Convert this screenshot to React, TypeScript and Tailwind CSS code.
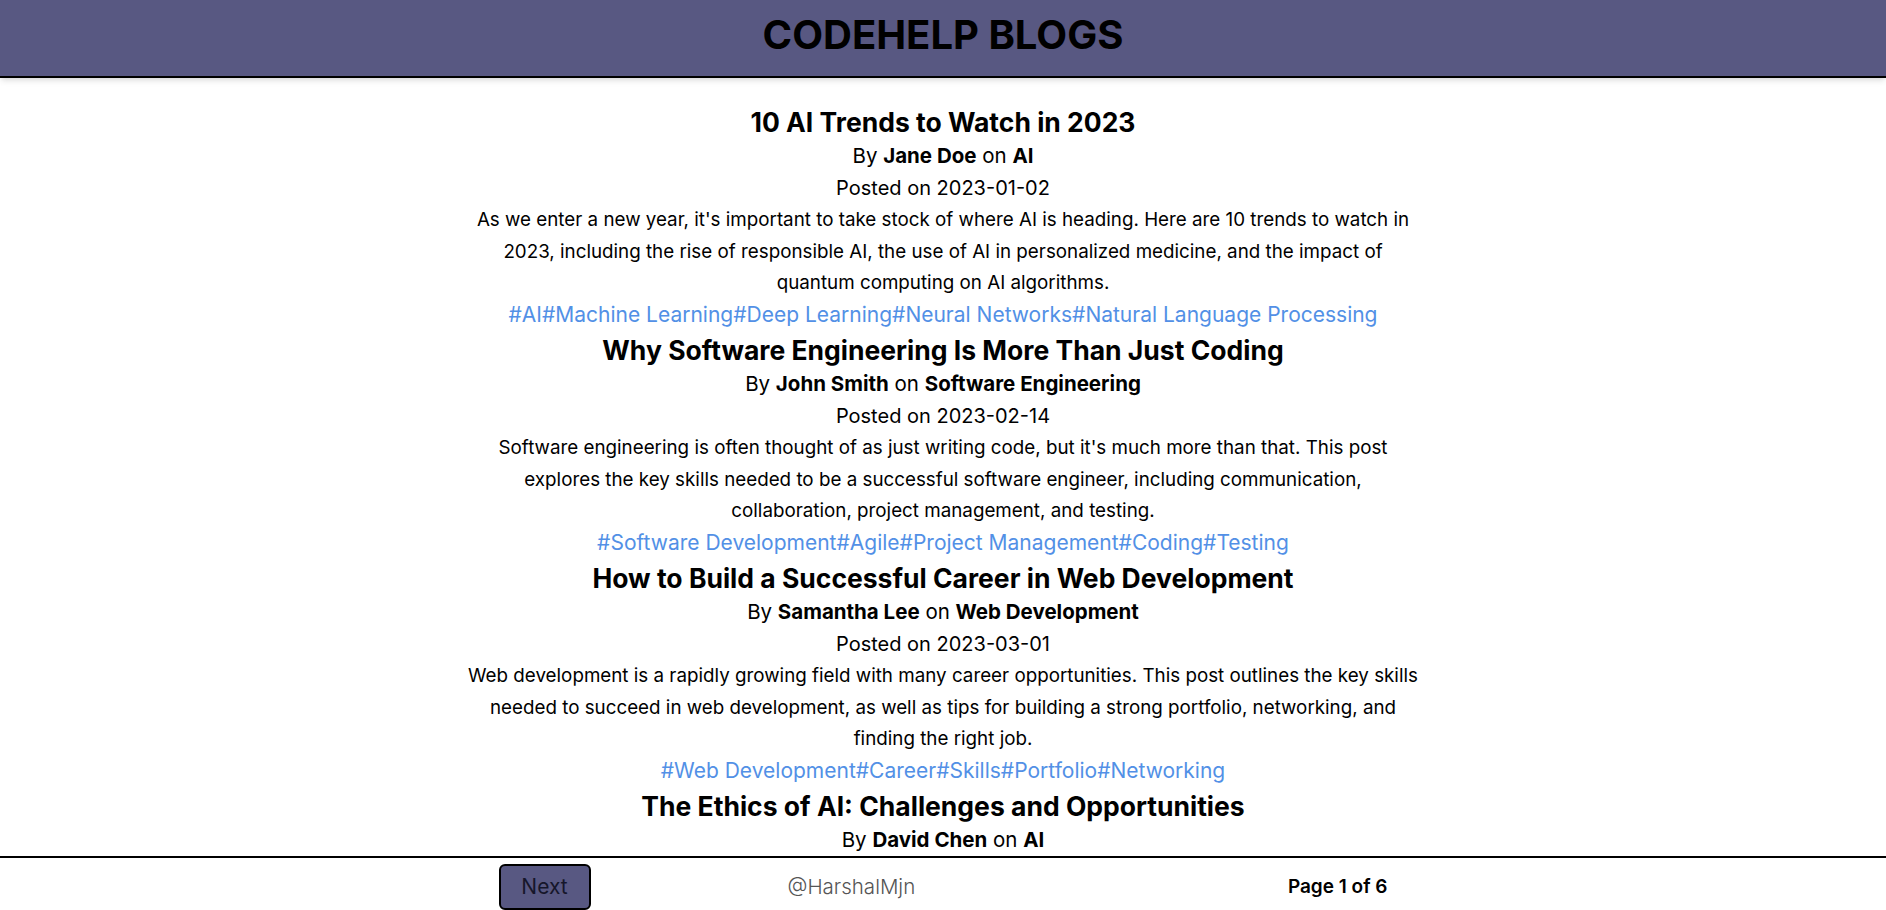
import React from 'react'

type Post = {
  id: number
  title: string
  author: string
  category: string
  date: string
  content: string
  tags: string[]
}

const posts: Post[] = [
  {
    id: 1,
    title: '10 AI Trends to Watch in 2023',
    author: 'Jane Doe',
    category: 'AI',
    date: '2023-01-02',
    content:
      "As we enter a new year, it's important to take stock of where AI is heading. Here are 10 trends to watch in 2023, including the rise of responsible AI, the use of AI in personalized medicine, and the impact of quantum computing on AI algorithms.",
    tags: ['AI', 'Machine Learning', 'Deep Learning', 'Neural Networks', 'Natural Language Processing'],
  },
  {
    id: 2,
    title: 'Why Software Engineering Is More Than Just Coding',
    author: 'John Smith',
    category: 'Software Engineering',
    date: '2023-02-14',
    content:
      "Software engineering is often thought of as just writing code, but it's much more than that. This post explores the key skills needed to be a successful software engineer, including communication, collaboration, project management, and testing.",
    tags: ['Software Development', 'Agile', 'Project Management', 'Coding', 'Testing'],
  },
  {
    id: 3,
    title: 'How to Build a Successful Career in Web Development',
    author: 'Samantha Lee',
    category: 'Web Development',
    date: '2023-03-01',
    content:
      'Web development is a rapidly growing field with many career opportunities. This post outlines the key skills needed to succeed in web development, as well as tips for building a strong portfolio, networking, and finding the right job.',
    tags: ['Web Development', 'Career', 'Skills', 'Portfolio', 'Networking'],
  },
  {
    id: 4,
    title: 'The Ethics of AI: Challenges and Opportunities',
    author: 'David Chen',
    category: 'AI',
    date: '2023-04-10',
    content:
      'As AI becomes more pervasive in our lives, it raises important ethical questions. This post examines the challenges and opportunities of AI ethics, including bias, privacy, accountability, and transparency.',
    tags: ['AI', 'Ethics', 'Bias', 'Privacy', 'Transparency'],
  },
]

function BlogCard({ post }: { post: Post }) {
  return (
    <div className="flex flex-col items-center text-center leading-[31.5px] pb-[2px]">
      <p className="text-[26.5px] leading-[36px] font-bold">{post.title}</p>
      <p className="text-[20.5px]">
        By <span className="font-bold">{post.author}</span> on{' '}
        <span className="font-bold">{post.category}</span>
      </p>
      <p className="text-[20px] pt-px">Posted on {post.date}</p>
      <p className="text-[18.8px]">{post.content}</p>
      <div className="text-[21px] text-[#5290e6]">
        {post.tags.map((tag, i) => (
          <span key={i}>#{tag}</span>
        ))}
      </div>
    </div>
  )
}

export default function App() {
  return (
    <div
      className="h-screen w-full flex flex-col bg-white text-black overflow-hidden"
      style={{ fontFamily: 'Inter, "Noto Sans", sans-serif' }}
    >
      {/* Header */}
      <header className="w-full bg-[#585882] border-b-2 border-black shadow-md z-10 pt-[11px] pb-[17px]">
        <h1 className="text-center text-[40px] leading-[48px] font-bold uppercase">Codehelp Blogs</h1>
      </header>

      {/* Posts */}
      <main className="flex-1 min-h-0 overflow-hidden">
        <div className="w-[956px] mx-auto pt-[26px] flex flex-col">
          {posts.map((p) => (
            <BlogCard key={p.id} post={p} />
          ))}
        </div>
      </main>

      {/* Pagination */}
      <footer className="w-full h-[54px] border-t-2 border-black bg-white">
        <div className="w-[889px] mx-auto pt-[6px] flex justify-between items-center">
          <div className="flex items-center gap-[197px]">
            <button className="w-[92px] py-[7px] text-[21px] leading-[28px] text-[#16162a] bg-[#585882] border-2 border-black rounded-md">
              Next
            </button>
            <a className="text-[20.5px] font-light text-[#555]">@HarshalMjn</a>
          </div>
          <p className="text-[19px] font-semibold">Page 1 of 6</p>
        </div>
      </footer>
    </div>
  )
}
